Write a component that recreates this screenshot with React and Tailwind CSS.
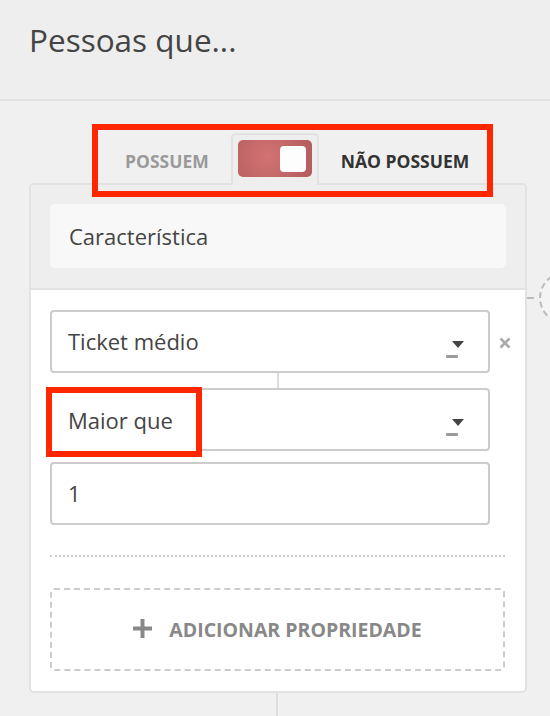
export default function App() {
  return (
    <div className="relative h-[716px] w-[550px] overflow-hidden bg-[#f0f0f0] font-['Open_Sans',sans-serif]">
      <div className="h-[101px] border-b-2 border-[#e2e2e2] bg-[#eeeeee] pl-[29px] pt-[24px]">
        <h1 className="text-[31.5px] leading-[32px] text-[#444444]">Pessoas que...</h1>
      </div>

      <div className="pt-[32px]">
        <div className="flex items-center gap-[22px] pl-[125px]">
          <span className="pt-[6px] text-[17.5px] font-bold text-[#9a9a9a]">POSSUEM</span>
          <div className="relative z-10 -mb-[2px] rounded-t-[5px] border-x-2 border-t-2 border-[#e2e2e2] bg-[#eeeeee] px-[5px] pb-[8px] pt-[5px]">
            <div className="flex h-[37px] w-[74px] items-center justify-end rounded-[5px] bg-[radial-gradient(circle_at_40%_45%,#d37272,#b15c5d)] pr-[6px]">
              <div className="h-[26px] w-[26px] rounded-[4px] bg-[#fdfdfd]" />
            </div>
          </div>
          <span className="pt-[6px] text-[17.5px] font-bold text-[#333333]">NÃO POSSUEM</span>
        </div>

        <div className="ml-[29px] w-[498px] overflow-hidden rounded-[5px] border-2 border-[#e2e2e2] bg-white">
          <div className="border-b-2 border-[#e2e2e2] bg-[#eeeeee] px-[19px] pb-[20px] pt-[19px]">
            <div className="flex h-[64px] items-center rounded-[5px] bg-[#f8f8f8] pl-[19px] text-[22px] text-[#444444]">
              Característica
            </div>
          </div>

          <div className="px-[19px] pb-[20px] pt-[20px]">
            <div className="flex items-center">
              <Select label="Ticket médio" />
              <svg width="12" height="12" viewBox="0 0 12 12" className="ml-[9px] mt-[2px] shrink-0">
                <path d="M1.5 1.5 L10.5 10.5 M10.5 1.5 L1.5 10.5" stroke="#aaaaaa" strokeWidth="2.6" />
              </svg>
            </div>
            <div className="ml-[227px] h-[15px] w-[2px] bg-[#dddddd]" />
            <Select label="Maior que" />
            <div className="mt-[11px] flex h-[63px] w-[440px] items-center rounded-[4px] border-2 border-[#cccccc] pl-[16px] text-[22px] text-[#444444]">
              1
            </div>

            <div className="mt-[30px] w-[455px] border-t-2 border-dotted border-[#cccccc]" />

            <div className="mt-[31px] flex h-[83px] w-[455px] items-center justify-center gap-[17px] rounded-[4px] border-2 border-dashed border-[#cccccc] text-[#888888]">
              <svg width="19" height="19" viewBox="0 0 19 19" className="mt-[-2px]">
                <path d="M9.5 0 V19 M0 9.5 H19" stroke="#888888" strokeWidth="4" />
              </svg>
              <span className="text-[19.5px] font-bold">ADICIONAR PROPRIEDADE</span>
            </div>
          </div>
        </div>

        <div className="ml-[276px] h-[30px] w-[2px] bg-[#dddddd]" />
      </div>

      <div className="absolute left-[527px] top-[297px] h-[2px] w-[7px] bg-[#bbbbbb]" />
      <div className="absolute left-[539px] top-[272px] h-[52px] w-[52px] rounded-full border-2 border-dashed border-[#bbbbbb] bg-[#f4f4f4]" />

      <div className="absolute left-[92px] top-[124px] h-[73px] w-[401px] border-[6px] border-[#ff2600]" />
      <div className="absolute left-[46px] top-[387px] flex h-[70px] w-[156px] items-center border-[6px] border-[#ff2600] bg-white pb-[4px] pl-[16px] text-[22px] text-[#444444]">
        Maior que
      </div>
    </div>
  )
}

function Select({ label }) {
  return (
    <div className="flex h-[63px] w-[440px] shrink-0 items-center justify-between rounded-[4px] border-2 border-[#cccccc] pl-[16px] pr-[24px] text-[22px] text-[#444444]">
      <span>{label}</span>
      <svg width="18" height="17" viewBox="0 0 18 17" className="mt-[16px]">
        <path d="M6 0 H18 L12 7 Z" fill="#444444" />
        <rect x="0" y="14" width="12" height="3" rx="1" fill="#9a9a9a" />
      </svg>
    </div>
  )
}
